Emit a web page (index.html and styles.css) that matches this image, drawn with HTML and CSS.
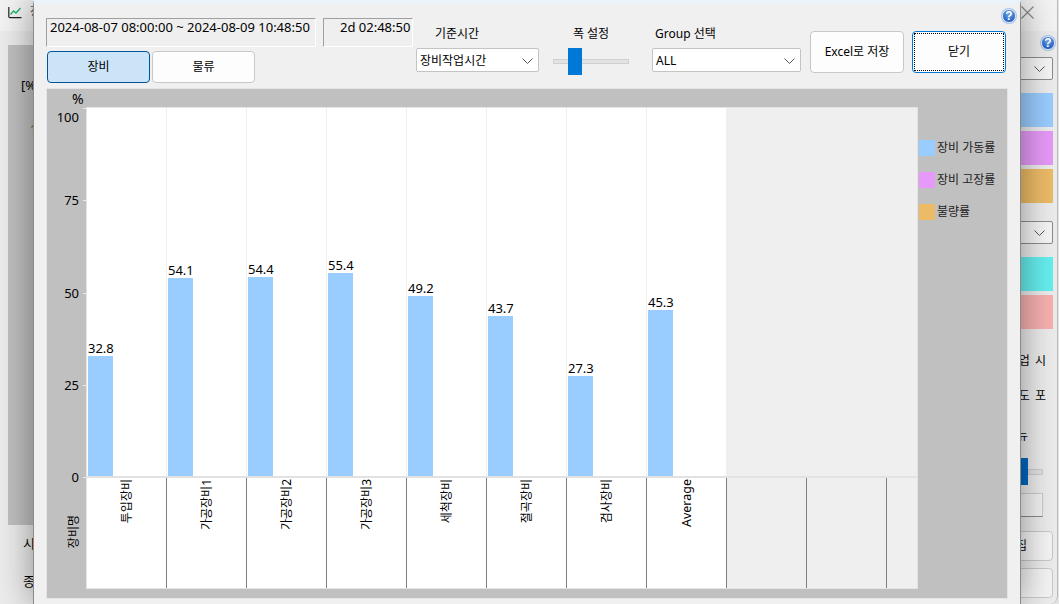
FILE: index.html
```html
<!DOCTYPE html>
<html lang="ko">
<head>
<meta charset="utf-8">
<title>장비 가동률</title>
<link rel="stylesheet" href="styles.css">
</head>
<body>
<div class="backdrop">
  <header class="back-head">
    <svg class="chart-icon" width="14" height="12" viewBox="0 0 14 12"><path d="M.8 0v9.5q0 1.2 1.2 1.2h11.5" fill="none" stroke="#222" stroke-width="1.2"/><path d="M2.5 7.5 5.5 4l2.500 2L12.500 1" fill="none" stroke="#1db56c" stroke-width="1.300"/></svg>
    <span class="back-title">장</span>
    <svg class="back-close" width="13" height="13" viewBox="0 0 13 13"><path d="M.5.5l12 12M12.500.5l-12 12" stroke="#888" stroke-width="1.100" fill="none"/></svg>
  </header>
  <div class="back-main">
    <section class="back-left">
      <div class="back-plot">
        <span class="back-unit">[%</span>
        <span class="back-tick">1</span>
      </div>
      <span class="back-label first">시</span>
      <span class="back-label second">종</span>
    </section>
    <aside class="back-right">
      <svg class="help help-back" width="16" height="16" viewBox="0 0 16 16"><use href="#help"/></svg>
      <div class="back-select s1"><svg width="11" height="6" viewBox="0 0 11 6"><path d="M.5.500 5.500 5.500 10.500.5" fill="none" stroke="#555"/></svg></div>
      <div class="swatch blue s2"></div>
      <div class="swatch pink"></div>
      <div class="swatch orange"></div>
      <div class="back-select s3"><svg width="11" height="6" viewBox="0 0 11 6"><path d="M.5.500 5.500 5.500 10.500.5" fill="none" stroke="#555"/></svg></div>
      <div class="swatch cyan s2"></div>
      <div class="swatch rose"></div>
      <div class="back-text t1">작업 시</div>
      <div class="back-text t2">빈도 포</div>
      <div class="back-text t3">메뉴</div>
      <div class="back-slider"><span class="back-thumb"></span><span class="back-track"></span></div>
      <div class="back-input"></div>
      <div class="back-btn b1">초기화집</div>
      <div class="back-btn b2"></div>
    </aside>
  </div>
</div>

<svg class="defs" width="0" height="0">
  <defs>
    <radialGradient id="hg" cx="50%" cy="35%" r="65%"><stop offset="0" stop-color="#6fa8ec"/><stop offset="1" stop-color="#1b56b8"/></radialGradient>
    <symbol id="help" viewBox="0 0 16 16">
      <circle cx="8" cy="8" r="8" fill="#a9c4ec"/>
      <circle cx="8" cy="8" r="6.500" fill="url(#hg)" stroke="#fff" stroke-width=".8"/>
      <text x="8" y="12.300" text-anchor="middle" font-family="Liberation Sans" font-weight="700" font-size="12" fill="#fff">?</text>
    </symbol>
  </defs>
</svg>

<main class="dialog">
  <svg class="help help-dialog" width="16" height="16" viewBox="0 0 16 16"><use href="#help"/></svg>
  <div class="toolbar">
    <div class="tb-left">
      <div class="info-row">
        <div class="sunken range">2024-08-07 08:00:00 ~ 2024-08-09 10:48:50</div>
        <div class="sunken duration">2d 02:48:50</div>
      </div>
      <div class="tab-row">
        <button class="tab active">장비</button>
        <button class="tab">물류</button>
      </div>
    </div>
    <div class="field basis">
      <div class="field-label centered">기준시간</div>
      <div class="select"><span>장비작업시간</span><svg width="11" height="6" viewBox="0 0 11 6"><path d="M.5.500 5.500 5.500 10.500.5" fill="none" stroke="#555"/></svg></div>
    </div>
    <div class="field width-set">
      <div class="field-label mid">폭 설정</div>
      <div class="slider"><span class="track"></span><span class="thumb"></span></div>
    </div>
    <div class="field group">
      <div class="field-label grp">Group 선택</div>
      <div class="select"><span>ALL</span><svg width="11" height="6" viewBox="0 0 11 6"><path d="M.5.500 5.500 5.500 10.500.5" fill="none" stroke="#555"/></svg></div>
    </div>
    <button class="action excel">Excel로 저장</button>
    <button class="action close"><span class="focus">닫기</span></button>
  </div>

  <section class="chart">
    <div class="y-axis">
      <div class="unit">%</div>
      <div class="ticks">
        <div class="tick top">100</div>
        <div class="tick">75</div>
        <div class="tick">50</div>
        <div class="tick">25</div>
        <div class="tick">0</div>
      </div>
      <div class="x-title">장비명</div>
    </div>
    <div class="plot">
      <div class="bars">
        <div class="col"><span class="val">32.8</span><span class="bar" style="height:120px"></span></div>
        <div class="col"><span class="val">54.1</span><span class="bar" style="height:198px"></span></div>
        <div class="col"><span class="val">54.4</span><span class="bar" style="height:199px"></span></div>
        <div class="col"><span class="val">55.4</span><span class="bar" style="height:203px"></span></div>
        <div class="col"><span class="val">49.2</span><span class="bar" style="height:180px"></span></div>
        <div class="col"><span class="val">43.7</span><span class="bar" style="height:160px"></span></div>
        <div class="col"><span class="val">27.3</span><span class="bar" style="height:100px"></span></div>
        <div class="col"><span class="val">45.3</span><span class="bar" style="height:166px"></span></div>
        <div class="col-empty"></div>
      </div>
      <div class="cats">
        <div class="cat"><span>투입장비</span></div>
        <div class="cat"><span>가공장비1</span></div>
        <div class="cat"><span>가공장비2</span></div>
        <div class="cat"><span>가공장비3</span></div>
        <div class="cat"><span>세척장비</span></div>
        <div class="cat"><span>절곡장비</span></div>
        <div class="cat"><span>검사장비</span></div>
        <div class="cat"><span class="latin">Average</span></div>
        <div class="cat off"></div>
        <div class="cat off"></div>
        <div class="cat off last"></div>
      </div>
    </div>
    <ul class="legend">
      <li><i class="key blue"></i>장비 가동률</li>
      <li><i class="key pink"></i>장비 고장률</li>
      <li><i class="key orange"></i>불량률</li>
    </ul>
  </section>
</main>
</body>
</html>
```
FILE: styles.css
```css
* { box-sizing: border-box; }
html, body { margin: 0; height: 100%; }
body {
  position: relative;
  width: 1059px;
  height: 604px;
  overflow: hidden;
  background: #e6e6e6;
  color: #000;
  font: 12px/18px "Noto Sans", "Noto Sans CJK KR", sans-serif;
}
.defs { position: absolute; }

/* window behind the dialog */
.backdrop {
  display: flex;
  flex-direction: column;
  width: 1058px;
  height: 604px;
  background: #ececec;
  border-radius: 0 0 8px 0;
  border-right: 1px solid #bbb;
}
.back-head {
  display: flex;
  align-items: flex-start;
  height: 31px;
  padding: 6px 23px 0 8px;
  background: #f3f3f3;
}
.chart-icon { margin-top: 1px; }
.back-title { margin-left: 8px; margin-top: -3px; color: #555; }
.back-close { margin-left: auto; }
.back-main { display: flex; flex: 1; padding: 4px 4px 0 8px; }
.back-left { flex: 1; display: flex; flex-direction: column; }
.back-plot {
  display: flex;
  flex-direction: column;
  margin-top: 10px;
  width: 100%;
  height: 480px;
  background: #c0c0c0;
  padding: 31px 0 0 13px;
}
.back-unit { font-size: 13px; }
.back-tick { margin: 27px 0 0 9px; color: #6b4a10; }
.back-label { margin-left: 15px; font-size: 13px; }
.back-label.first { margin-top: 9px; }
.back-label.second { margin-top: 20px; }
.back-right {
  width: 100px;
  display: flex;
  flex-direction: column;
  align-items: flex-end;
}
.help-back { margin-right: -3px; }
.back-select {
  display: flex;
  align-items: center;
  justify-content: flex-end;
  width: 100px;
  height: 23px;
  padding-right: 7px;
  background: #f5f5f5;
  border: 1px solid #8c8c8c;
  border-radius: 2px;
}
.s1 { margin-top: 6px; }
.s3 { margin-top: 18px; }
.swatch { width: 100px; height: 34px; margin-top: 4px; }
.swatch.s2 { margin-top: 13px; }
.swatch.blue { background: #99ccff; }
.swatch.pink { background: #e699f8; }
.swatch.orange { background: #edbb66; }
.swatch.cyan { background: #66eeee; }
.swatch.rose { background: #f8b0b0; }
.back-text { font-size: 12px; white-space: nowrap; padding-right: 6px; letter-spacing: 1px; }
.t1 { margin-top: 23px; }
.t2 { margin-top: 17px; }
.t3 { margin-top: 22px; padding-right: 24px; }
.back-slider { display: flex; align-items: center; margin-top: 13px; padding-right: 10px; }
.back-thumb { width: 20px; height: 27px; background: #0067c0; }
.back-track { width: 15px; height: 6px; background: #e2e2e2; border: 1px solid #ccc; }
.back-input { width: 100px; height: 24px; margin: 8px 10px 0 0; background: #f2f2f2; border: 1px solid #ccc; border-bottom-color: #888; }
.back-btn { width: 100px; height: 30px; background: #f4f4f4; border: 1px solid #c8c8c8; border-radius: 4px; text-align: right; padding: 5px 25px 0 0; white-space: nowrap; overflow: hidden; direction: ltr; }
.b1 { margin-top: 14px; }
.b2 { margin-top: 7px; }

/* dialog */
.dialog {
  position: absolute;
  left: 33px;
  top: 0;
  width: 988px;
  height: 604px;
  padding-left: 12px;
  background: #f0f0f0;
  border-left: 1px solid #8a8a8a;
  border-right: 1px solid #8a8a8a;
  border-top: 4px solid #eaf2fa;
  box-shadow: 0 0 34px rgba(0, 0, 0, .42);
}
.help-dialog { position: absolute; left: 967px; top: 4px; }
.toolbar { display: flex; height: 85px; }
.tb-left { width: 367px; padding-top: 14px; margin-right: 3px; }
.info-row { display: flex; justify-content: space-between; }
.sunken {
  height: 29px;
  padding: 0 0 0 3px;
  font-size: 13px;
  line-height: 16px;
  background: #efefef;
  border: 1px solid;
  border-color: #a0a0a0 #fff #fff #a0a0a0;
  white-space: nowrap;
}
.range { width: 270px; }
.duration { width: 90px; padding-left: 16px; }
.tab-row { display: flex; gap: 2px; margin: 4px 0 0 1px; }
.tab {
  width: 103px;
  height: 32px;
  font: inherit;
  background: #fdfdfd;
  color: #000;
  border: 1px solid #c8c8c8;
  border-radius: 4px;
  padding: 0;
}
.tab.active { background: #cce4f7; border-color: #005499; }
.field { padding-top: 21px; }
.field-label { height: 18px; white-space: nowrap; }
.basis { width: 123px; margin-right: 14px; }
.width-set { width: 76px; margin-right: 23px; }
.group { width: 149px; margin-right: 9px; }
.centered { padding-left: 19px; }
.mid { text-align: center; }
.grp { padding-left: 3px; }
.select {
  display: flex;
  align-items: center;
  justify-content: space-between;
  height: 24px;
  margin-top: 5px;
  padding: 1px 5px 0 3px;
  background: #fff;
  border: 1px solid #c4c4c4;
  border-radius: 2px;
}
.slider { position: relative; height: 27px; margin-top: 5px; }
.track { position: absolute; left: 0; right: 0; top: 11px; height: 5px; background: #e3e3e3; border: 1px solid #d0d0d0; }
.thumb { position: absolute; left: 15px; top: 0; width: 14px; height: 27px; background: #0078d7; }
.action {
  width: 94px;
  height: 42px;
  margin: 27px 8px 0 0;
  padding: 0;
  font: inherit;
  color: #000;
  background: #fdfdfd;
  border: 1px solid #c8c8c8;
  border-radius: 4px;
}
.close { border-color: #0078d7; padding: 1px; }
.focus {
  display: flex;
  align-items: center;
  justify-content: center;
  width: 100%;
  height: 100%;
  border: 1px dotted #000;
}

/* chart */
.chart {
  display: grid;
  grid-template-columns: 40px 830px 90px;
  width: 960px;
  height: 509px;
  margin-left: 1px;
  padding-top: 19px;
  background: #c0c0c0;
  outline: 1px solid #e4e4e4;
}
.y-axis { position: relative; font-size: 13px; }
.unit { position: absolute; left: 25px; top: -18px; font-size: 14px; }
.tick { position: relative; height: 18px; margin-top: 74px; padding-right: 8px; text-align: right; }
.tick:nth-child(3) { margin-top: 75px; }
.tick.top { margin-top: 0; margin-bottom: -9px; }
.tick::after { content: ""; position: absolute; right: 0; top: 9px; width: 4px; height: 1px; background: #e8e8e8; }
.tick.top::after { top: 0; }
.x-title {
  position: absolute;
  left: 20px;
  top: 407px;
  writing-mode: vertical-rl;
  text-orientation: sideways;
  transform: rotate(180deg);
  font-size: 12px;
  line-height: 14px;
}
.plot { display: flex; flex-direction: column; width: 830px; height: 480px; background: #fff; outline: 1px solid #e4e4e4; }
.bars { display: flex; height: 368px; }
.col {
  width: 80px;
  display: flex;
  flex-direction: column;
  justify-content: flex-end;
  align-items: flex-start;
  padding-left: 1px;
  border-right: 1px solid #efefef;
  font-size: 13px;
}
.col-empty { flex: 1; background: #efefef; }
.val { line-height: 16px; }
.bar { display: block; width: 25px; background: #99ccff; }
.cats { display: flex; flex: 1; border-top: 2px solid #e2e2e2; }
.cat {
  width: 80px;
  display: flex;
  justify-content: center;
  align-items: flex-start;
  padding: 1px 0 0 0;
  border-right: 1px solid #808080;
}
.cat span {
  writing-mode: vertical-rl;
  text-orientation: sideways;
  transform: rotate(180deg);
  white-space: nowrap;
  line-height: 14px;
}
.cat .latin { font-size: 12.500px; }
.cat.off { background: #efefef; }
.cat.last { width: 30px; border-right: 0; }
.legend { list-style: none; margin: 0; padding: 32px 0 0 2px; }
.legend li { display: flex; align-items: center; height: 16px; margin-bottom: 16px; white-space: nowrap; font-size: 12px; color: #222; }
.key { width: 16px; height: 16px; margin-right: 2px; }
.key.blue { background: #99ccff; }
.key.pink { background: #e699f8; }
.key.orange { background: #edbb66; }
```
